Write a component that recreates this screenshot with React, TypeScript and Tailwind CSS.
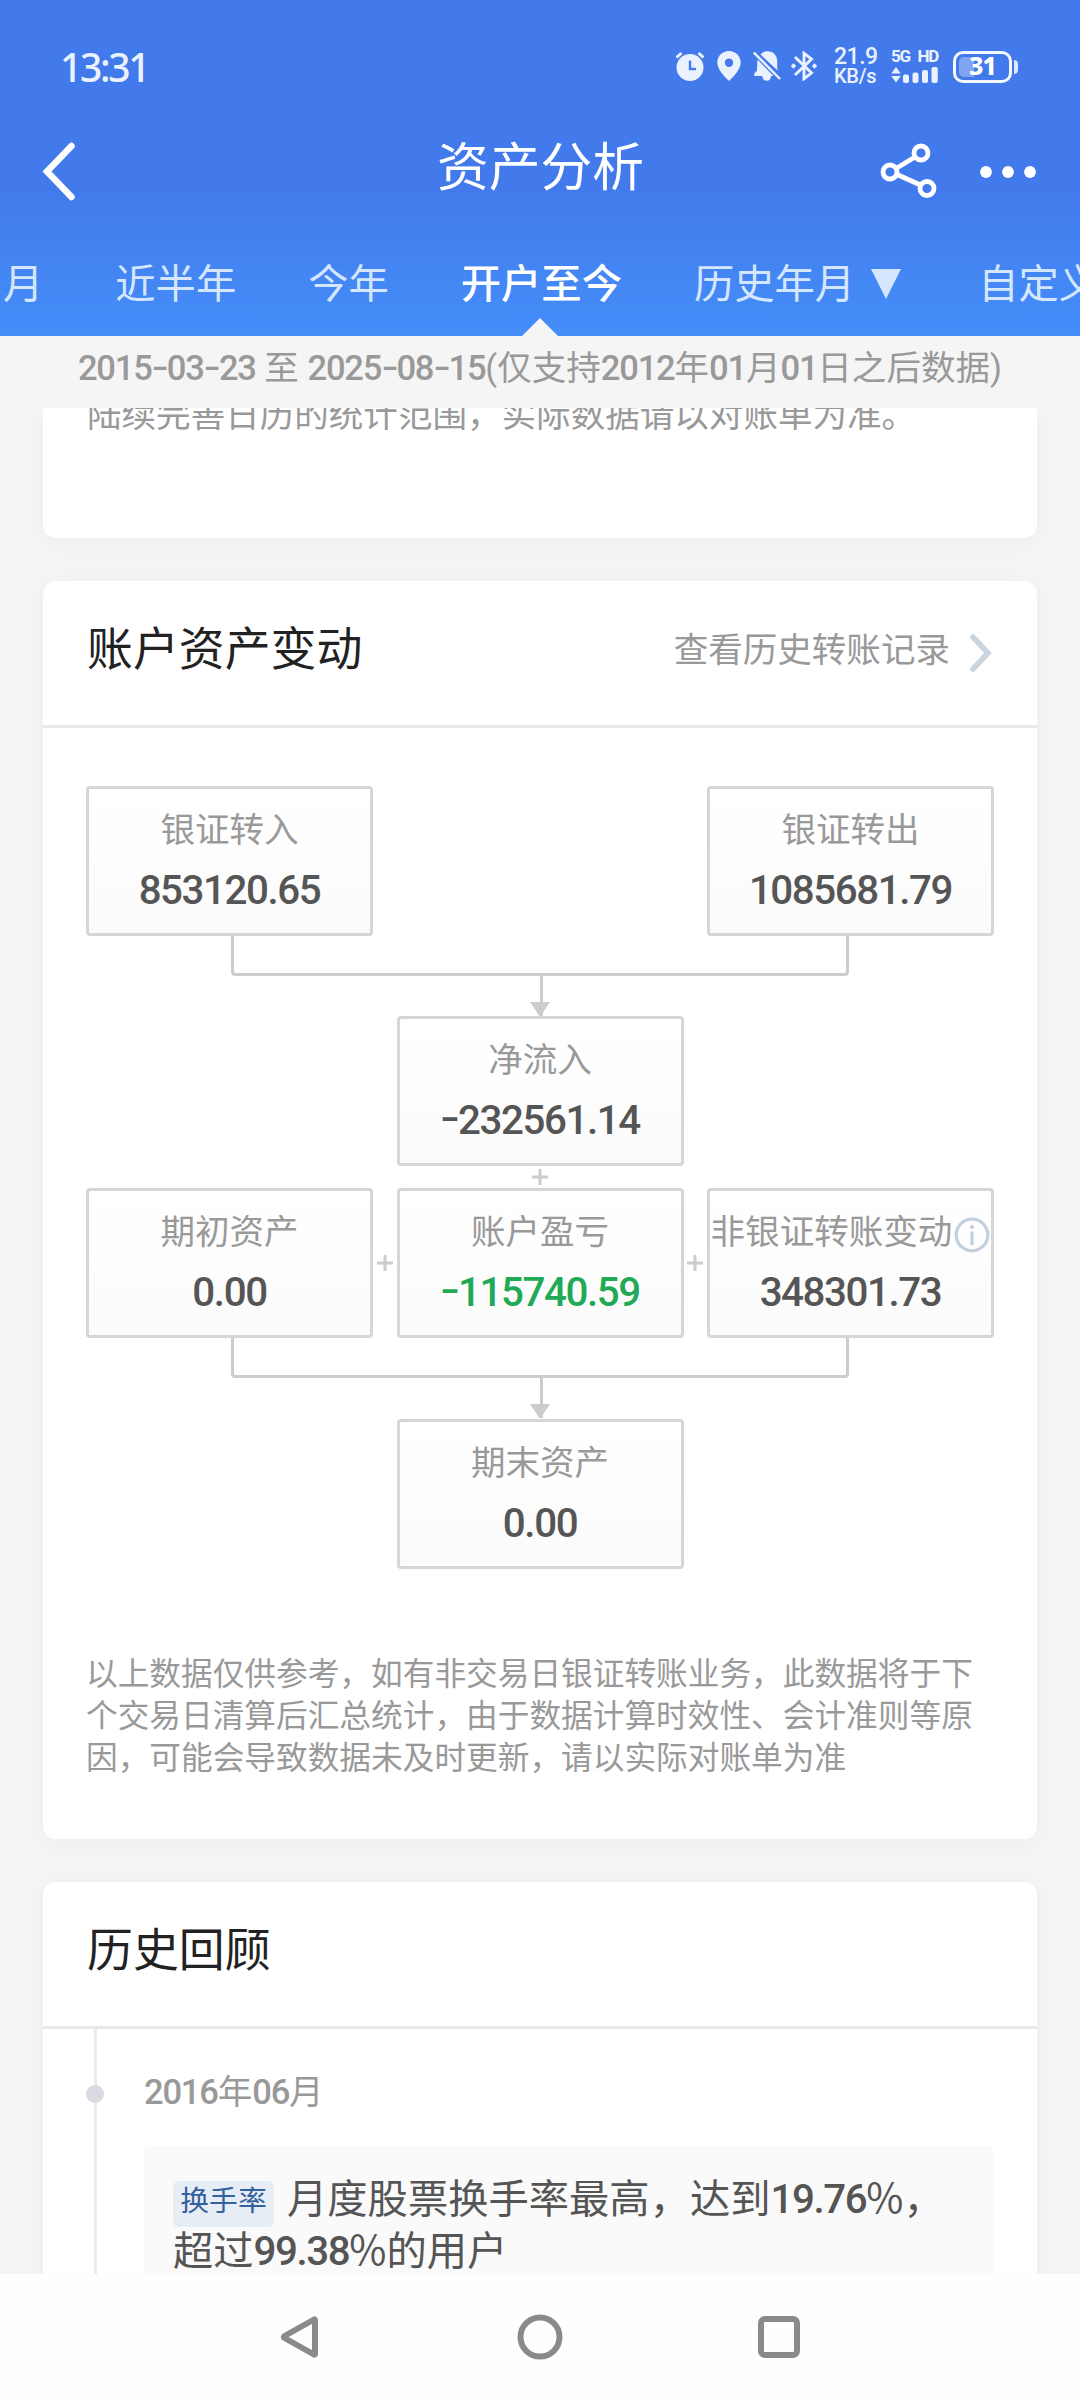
import type { ReactNode } from "react";

const tabs = [
  { label: "月" },
  { label: "近半年" },
  { label: "今年" },
  { label: "开户至今", active: true },
  { label: "历史年月", dropdown: true },
  { label: "自定义" },
];

// Digits are set a little tighter than the Chinese text around them,
// with a wider hyphen
function Num({ children }: { children: string }) {
  const parts = children.split("-");
  return (
    <span className="font-medium tracking-[-0.035em]">
      {parts.map((part, i) => (
        <span key={i}>
          {i > 0 && <span className="inline-block mx-[0.068em] scale-x-140 -translate-y-[0.04em]">-</span>}
          {part}
        </span>
      ))}
    </span>
  );
}

function Percent() {
  return <span className="font-['Noto_Sans_CJK_SC']">%</span>;
}

function StatusBar() {
  return (
    <div className="h-[116px] pt-4 pl-[60px] pr-[62px] flex items-center justify-between text-[#ebf2ff]">
      <span className="text-[39px] leading-none font-medium tracking-[-2.3px] font-['Noto_Sans']">13:31</span>

      <div className="flex items-center">
        {/* Alarm */}
        <svg viewBox="0 0 30 30" className="w-[30px] h-[30px]">
          <circle cx="15" cy="16.5" r="13.5" fill="currentColor" />
          <path d="M1.5 6.5 6.5 2M28.5 6.5 23.5 2" stroke="currentColor" strokeWidth="3" fill="none" />
          <path d="M15 9.5v8.5h6" stroke="#427aeb" strokeWidth="2.4" fill="none" />
        </svg>

        {/* Location */}
        <svg viewBox="0 0 24 30" className="ml-3 w-6 h-[30px]">
          <path
            fillRule="evenodd"
            fill="currentColor"
            d="M12 0C5.4 0 .3 5 .3 11.6.3 18.5 7 25 12 30c5-5 11.7-11.5 11.7-18.4C23.7 5 18.6 0 12 0Zm0 7.5a4.2 4.2 0 1 1 0 8.4 4.2 4.2 0 0 1 0-8.4Z"
          />
        </svg>

        {/* Muted bell */}
        <svg viewBox="0 0 28 30" className="ml-3 w-7 h-[30px]" fill="currentColor">
          <path d="M7.5 3.6C9 1.5 11.5.3 14.5.3c5.6 0 9.7 4 9.7 9.7v7.5c0 1.2.3 1.6.7 2.2Z" />
          <path d="M4.5 8.5 20.5 25h-2.3c-.3 2.8-2 4.8-4.5 4.8s-4.2-2-4.5-4.8H1.3v-2.6L4 19.5Z" />
          <path d="M.8 1.5 27 28" stroke="currentColor" strokeWidth="2.4" fill="none" />
        </svg>

        {/* Bluetooth */}
        <svg viewBox="0 0 26 30" className="ml-[10px] mr-px w-[26px] h-[30px]" fill="none" stroke="currentColor" strokeWidth="2.9">
          <path d="M4 6 20.5 22 13 27.8V2.2L20.5 8 4 24" />
          <path d="m2.5 12.3 2.7 2.7-2.7 2.7L-.2 15ZM23.5 12.3 26.2 15l-2.7 2.7L20.8 15Z" fill="currentColor" stroke="none" />
        </svg>

        <div className="ml-4 w-[43px] flex flex-col font-medium font-['Roboto']">
          <span className="text-[23px] leading-[20px] tracking-[-0.5px]">21.9</span>
          <span className="text-[20px] leading-[18px] tracking-[-0.3px]">KB/s</span>
        </div>

        <div className="ml-[14px] w-[47px] flex flex-col gap-[3px]">
          <div className="flex justify-between text-[17px] leading-[15px] font-bold font-['Roboto'] tracking-[-1.3px]">
            <span>5G</span>
            <span>HD</span>
          </div>
          <svg viewBox="0 0 47 16" className="w-[47px] h-4" fill="currentColor">
            <path d="M5 0 9.7 6.5H.3ZM5 15.5.3 9H9.7Z" />
            <rect x="12" y="7.5" width="6" height="8.5" rx="2" />
            <rect x="21.5" y="5.5" width="6" height="10.5" rx="2" />
            <rect x="31" y="3" width="6" height="13" rx="2" />
            <rect x="40.5" y="0" width="6.3" height="16" rx="2" />
          </svg>
        </div>

        <div className="ml-[15px] mt-px flex items-center gap-[2px]">
          <div className="relative w-[59px] h-8 rounded-[10px] border-[3px] border-[#f3f7ff] flex items-center justify-center">
            <div className="absolute left-[3px] top-[3px] w-[15px] h-5 rounded-l-[5px] bg-[#7fa5f3]" />
            <span className="relative text-[24.5px] leading-none font-extrabold text-white font-['Noto_Sans'] tracking-[-1px]">31</span>
          </div>
          <div className="w-[4px] h-[14px] rounded-r-[4px] bg-[#dce8ff]" />
        </div>
      </div>
    </div>
  );
}

function TitleBar() {
  return (
    <div className="h-[110px] pl-[39px] pr-[44px] flex items-center justify-between">
      <svg viewBox="0 0 40 60" className="w-[130px] h-[60px]" preserveAspectRatio="xMinYMid" fill="none" stroke="#fff" strokeWidth="6.5" strokeLinecap="round">
        <path d="M32.5 5 8 30.5 32.5 56" />
      </svg>
      <h1 className="ml-[6px] text-[51.8px] leading-none text-white pb-[4px]">资产分析</h1>
      <div className="w-[130px] flex items-center justify-end -mt-px">
        <svg viewBox="0 0 58 60" className="w-[58px] h-[60px] shrink-0" fill="none" stroke="#fff" strokeWidth="4.8">
          <circle cx="10" cy="31" r="7" />
          <circle cx="41" cy="12" r="7" />
          <circle cx="47" cy="47.5" r="7" />
          <path d="M16 27.5 35 16M17 33.5 40.5 44" />
        </svg>
        <svg viewBox="0 0 56 60" className="ml-[42px] w-[56px] h-[60px] shrink-0" fill="#fff">
          <circle cx="6" cy="31" r="5.9" />
          <circle cx="28" cy="31" r="5.9" />
          <circle cx="50" cy="31" r="5.9" />
        </svg>
      </div>
    </div>
  );
}

function Tabs() {
  return (
    <div className="h-[110px] pl-[3px] flex gap-[72px] whitespace-nowrap">
      {tabs.map((tab) => (
        <div
          key={tab.label}
          className={`relative h-full pt-2 shrink-0 flex items-center text-[40.3px] leading-none ${
            tab.active ? "text-white font-medium" : "text-[#d5e6ff]"
          }`}
        >
          {tab.label}
          {tab.dropdown && (
            <svg viewBox="0 0 30 30" className="-mt-[2px] ml-4 mr-[5px] w-[30px] h-[30px]">
              <path d="M0 0h30L15 30Z" fill="#d5e6ff" />
            </svg>
          )}
          {tab.active && (
            <svg viewBox="0 0 36 18" className="absolute bottom-0 left-1/2 -ml-[19px] w-9 h-[18px]">
              <path d="M0 18 18 0l18 18Z" fill="#f5f5f5" />
            </svg>
          )}
        </div>
      ))}
    </div>
  );
}

function FlowBox({ label, value, green, info }: { label: string; value: string; green?: boolean; info?: boolean }) {
  return (
    <div className="w-[287px] h-[150px] shrink-0 rounded-[4px] border-[3px] border-[#d6d6d6] bg-gradient-to-b from-white to-[#fbfbfb] flex flex-col items-center pt-[21px]">
      <div className="h-10 flex items-center text-[34.56px] leading-[40px] text-[#999] whitespace-nowrap">
        {label}
        {info && (
          <svg viewBox="0 0 36 36" className="ml-[2px] mt-[6px] w-9 h-9" fill="none" stroke="#c2cfdc" strokeWidth="3.2">
            <circle cx="18" cy="18" r="15.8" />
            <path d="M18 14.5V28" />
            <circle cx="18" cy="10" r="2" fill="#c2cfdc" stroke="none" />
          </svg>
        )}
      </div>
      <div className={`mt-[17px] text-[40.3px] leading-[48px] ${green ? "text-[#22a957]" : "text-[#555]"}`}>
        <Num>{value}</Num>
      </div>
    </div>
  );
}

function Connector() {
  return (
    <svg viewBox="0 0 908 80" className="block w-[908px] h-20" fill="none" stroke="#ccc" strokeWidth="3">
      <path d="M146.5 0V35.5q0 3 3 3H758.5q3 0 3-3V0" />
      <path d="M455.5 40V80" />
      <path d="M444 66h20l-10 15Z" fill="#ccc" stroke="none" />
    </svg>
  );
}

function Plus() {
  return (
    <svg viewBox="0 0 16 16" className="w-4 h-4 shrink-0" stroke="#ccc" strokeWidth="3">
      <path d="M0 8h16M8 0v16" />
    </svg>
  );
}

function Card({ children, className }: { children: ReactNode; className: string }) {
  return (
    <section className={`w-[994px] mx-auto shrink-0 bg-white shadow-[0_4px_30px_rgba(0,0,0,0.04)] ${className}`}>
      {children}
    </section>
  );
}

export default function App() {
  return (
    <div className="w-[1080px] h-[2400px] overflow-hidden flex flex-col bg-[#f5f5f5] font-['Roboto','Noto_Sans_CJK_SC',sans-serif]">
      <header className="h-[336px] shrink-0 overflow-hidden bg-[linear-gradient(180deg,#427aeb_0px,#427aeb_190px,#448efa_336px)]">
        <StatusBar />
        <TitleBar />
        <Tabs />
      </header>

      <div className="h-[72px] shrink-0 pb-[7px] flex items-center justify-center text-[34.56px] leading-none text-[#999] whitespace-pre">
        <p>
          <Num>2015-03-23</Num> 至 <Num>2025-08-15</Num>(仅支持<Num>2012</Num>年<Num>01</Num>月<Num>01</Num>日之后数据)
        </p>
      </div>

      <main className="h-[1866px] shrink-0 overflow-hidden flex flex-col">
        <Card className="h-[130px] rounded-b-[13px] px-[44px]">
          <p className="-mt-[19px] text-[34.56px] leading-[52px] text-[#999] whitespace-nowrap">
            陆续完善日历的统计范围，实际数据请以对账单为准。
          </p>
        </Card>

        <Card className="mt-[43px] h-[1258px] rounded-[13px]">
          <div className="h-[147px] pl-[44px] pr-[44px] pb-[6px] border-b-[3px] border-[#e8e8e8] flex items-center justify-between">
            <h2 className="text-[45.9px] leading-none text-[#222]">账户资产变动</h2>
            <a className="flex items-center text-[34.56px] leading-none text-[#999]">
              查看历史转账记录
              <svg viewBox="0 0 24 40" className="ml-[19px] mt-[6px] w-6 h-10" fill="none" stroke="#cbd5e0" strokeWidth="5.5" strokeLinecap="round">
                <path d="M4 4 19 20 4 36" />
              </svg>
            </a>
          </div>

          <div className="pt-[58px] px-[43px]">
            <div className="flex justify-between">
              <FlowBox label="银证转入" value="853120.65" />
              <FlowBox label="银证转出" value="1085681.79" />
            </div>
            <Connector />
            <div className="flex flex-col items-center">
              <FlowBox label="净流入" value="-232561.14" />
              <div className="h-[22px] flex items-center">
                <Plus />
              </div>
            </div>
            <div className="flex items-center justify-between">
              <FlowBox label="期初资产" value="0.00" />
              <Plus />
              <FlowBox label="账户盈亏" value="-115740.59" green />
              <Plus />
              <FlowBox label="非银证转账变动" value="348301.73" info />
            </div>
            <Connector />
            <div className="mt-px flex justify-center">
              <FlowBox label="期末资产" value="0.00" />
            </div>
            <p className="mt-[85px] text-[31.68px] leading-[42.2px] text-[#999]">
              以上数据仅供参考，如有非交易日银证转账业务，此数据将于下个交易日清算后汇总统计，由于数据计算时效性、会计准则等原因，可能会导致数据未及时更新，请以实际对账单为准
            </p>
          </div>
        </Card>

        <Card className="mt-[43px] h-[500px] rounded-t-[13px]">
          <div className="h-[147px] px-[44px] pb-[6px] border-b-[3px] border-[#e8e8e8] flex items-center">
            <h2 className="text-[45.9px] leading-none text-[#222]">历史回顾</h2>
          </div>

          <div className="relative pl-[101px] pr-[43px] pt-[40px]">
            {/* Timeline rail */}
            <div className="absolute left-[51px] top-0 w-[3px] h-[360px] bg-[#ebebed]" />
            <div className="absolute left-[43px] top-[56px] w-[18px] h-[18px] rounded-full bg-[#dadae0]" />

            <div className="text-[34.56px] leading-[46px] text-[#999]">
              <Num>2016</Num>年<Num>06</Num>月
            </div>
            <div className="mt-[31px] h-[200px] rounded-[6px] bg-[#fafafa] pl-[29px] pt-[24px] text-[40.3px] leading-[52px] text-[#555] whitespace-nowrap">
              <div className="flex items-start">
                <span className="mt-[11px] mr-[13px] w-[101px] h-[46px] rounded-[6px] bg-[#e7edf4] text-[#33609f] text-[28.8px] leading-[40px] text-center">
                  换手率
                </span>
                <span className="h-[52px]">
                  月度股票换手率最高，达到<Num>19.76</Num>
                  <Percent />，
                </span>
              </div>
              <div className="-mt-[5px]">
                超过<Num>99.38</Num>
                <Percent />的用户
              </div>
            </div>
          </div>
        </Card>
      </main>

      <nav className="flex-1 bg-[#fefefe] flex justify-center pt-[40px]">
        <div className="w-[521px] h-[46px] -ml-px flex items-center justify-between">
          <svg viewBox="0 0 44 46" className="w-11 h-[46px]" fill="none" stroke="#8a8a8a" strokeWidth="6" strokeLinejoin="round">
            <path d="M36 6v34q0 1-1 .5L5.500 24q-1-1 0-2l29.500-16.500q1-.5 1 .5Z" />
          </svg>
          <svg viewBox="0 0 46 46" className="w-[46px] h-[46px] -ml-[2px]" fill="none" stroke="#8a8a8a" strokeWidth="6">
            <circle cx="23" cy="23" r="19.5" />
          </svg>
          <div className="w-[42px] h-[42px] rounded-[7px] border-[6px] border-[#8a8a8a]" />
        </div>
      </nav>
    </div>
  );
}
